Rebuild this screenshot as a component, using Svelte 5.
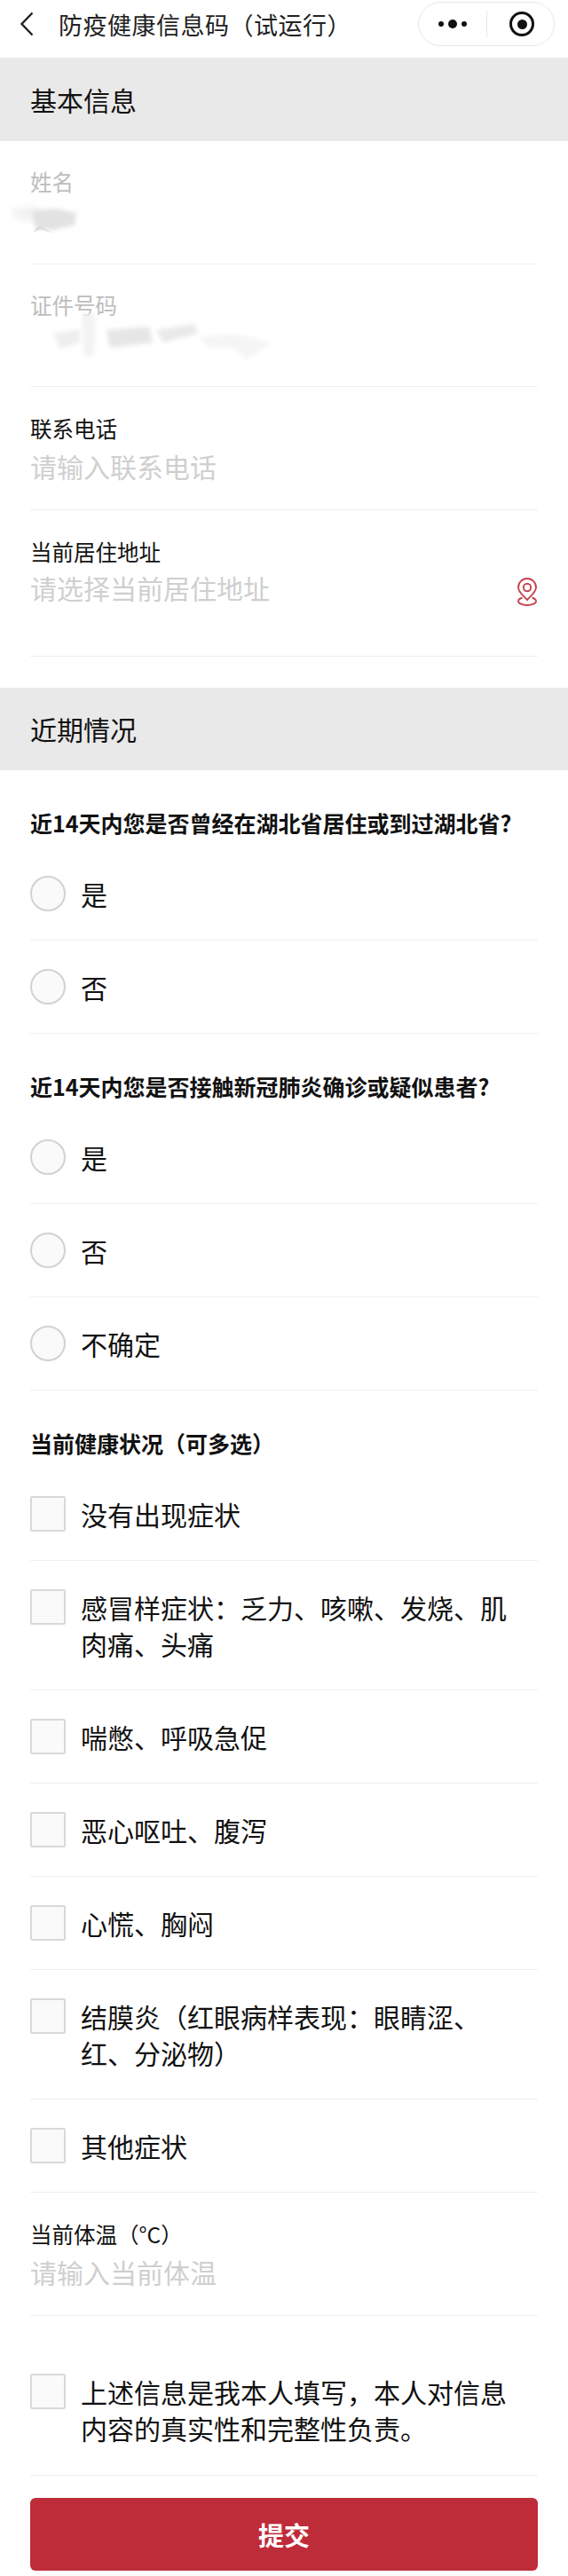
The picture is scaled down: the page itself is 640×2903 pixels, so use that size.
<script>
  const radios1 = ['是', '否'];
  const radios2 = ['是', '否', '不确定'];
  const symptoms = [
    '没有出现症状',
    '感冒样症状：乏力、咳嗽、发烧、肌肉痛、头痛',
    '喘憋、呼吸急促',
    '恶心呕吐、腹泻',
    '心慌、胸闷',
    '结膜炎（红眼病样表现：眼睛涩、红、分泌物）',
    '其他症状'
  ];
</script>

<div class="page">
  <header class="nav">
    <svg class="back" viewBox="0 0 18 30" width="18" height="30">
      <path d="M15.5 2.5 L3.5 15 L15.5 27.5" fill="none" stroke="#222" stroke-width="2.4" />
    </svg>
    <span class="nav-title">防疫健康信息码（试运行）</span>
    <div class="capsule">
      <div class="more">
        <i class="dot"></i><i class="dot big"></i><i class="dot"></i>
      </div>
      <span class="sep"></span>
      <div class="target"><i></i></div>
    </div>
  </header>

  <div class="section">基本信息</div>

  <div class="field muted-field">
    <div class="label muted">姓名</div>
    <!-- blurred out personal data -->
    <svg class="smudge name" width="340" height="45" viewBox="0 225 340 45">
      <defs>
        <filter id="soft" x="-30%" y="-30%" width="160%" height="160%"><feGaussianBlur stdDeviation="2.5" /></filter>
        <filter id="softer" x="-30%" y="-30%" width="160%" height="160%"><feGaussianBlur stdDeviation="3.5" /></filter>
      </defs>
      <path d="M12 236 L38 232 L50 240 L40 250 L16 246 Z" fill="#f2f2f2" filter="url(#softer)" />
      <path d="M36 238 L62 235 L86 240 L84 254 L60 259 L40 258 Z" fill="#e2e2e2" filter="url(#soft)" />
      <path d="M37 262 L44 254 L60 263 L46 258 Z" fill="#dcdcdc" />
    </svg>
  </div>
  <div class="field muted-field short">
    <div class="label muted">证件号码</div>
    <svg class="smudge idno" width="340" height="60" viewBox="0 350 340 60">
      <path d="M92 354 L108 354 L106 400 L94 402 Z" fill="#f3f3f3" filter="url(#soft)" />
      <path d="M60 376 L90 371 L90 386 L68 393 Z" fill="#eeeeee" filter="url(#soft)" />
      <path d="M120 372 L168 368 L172 386 L124 392 Z" fill="#e6e6e6" filter="url(#soft)" />
      <path d="M176 372 L220 365 L222 376 L184 386 Z" fill="#e9e9e9" filter="url(#soft)" />
      <path d="M224 380 L262 376 L306 386 L278 405 L264 392 L236 392 Z" fill="#f5f5f5" filter="url(#soft)" />
    </svg>
  </div>
  <div class="field">
    <div class="label">联系电话</div>
    <div class="placeholder">请输入联系电话</div>
  </div>
  <div class="field address">
    <div class="label">当前居住地址</div>
    <div class="address-row">
      <div class="placeholder">请选择当前居住地址</div>
      <svg class="pin" viewBox="0 0 24 32" width="24" height="32" fill="none" stroke="#c4434f" stroke-width="1.9">
        <path d="M12 25 C8 20.5 2 16.5 2 11 A10 10 0 0 1 22 11 C22 16.5 16 20.5 12 25 Z" />
        <circle cx="12" cy="11" r="4.2" />
        <path d="M6.5 22.5 C3.5 23.5 2 25 2 26.5 C2 29 6.5 31 12 31 C17.5 31 22 29 22 26.5 C22 25 20.5 23.5 17.5 22.5" />
      </svg>
    </div>
  </div>

  <div class="section second-section">近期情况</div>

  <div class="question">近14天内您是否曾经在湖北省居住或到过湖北省?</div>
  {#each radios1 as r}
    <div class="option"><span class="radio"></span><span class="text">{r}</span></div>
  {/each}

  <div class="question">近14天内您是否接触新冠肺炎确诊或疑似患者?</div>
  {#each radios2 as r}
    <div class="option"><span class="radio"></span><span class="text">{r}</span></div>
  {/each}

  <div class="question">当前健康状况（可多选）</div>
  {#each symptoms as s}
    <div class="option"><span class="box"></span><span class="text">{s}</span></div>
  {/each}

  <div class="field">
    <div class="label">当前体温（°C）</div>
    <div class="placeholder">请输入当前体温</div>
  </div>

  <div class="option agree"><span class="box"></span><span class="text">上述信息是我本人填写，本人对信息内容的真实性和完整性负责。</span></div>

  <button class="submit">提交</button>
</div>

<style>
  :global(body) {
    margin: 0;
    background: #fff;
  }

  .page {
    width: 640px;
    height: 2903px;
    overflow: hidden;
    font-family: "Noto Sans CJK SC", "Noto Sans", sans-serif;
    color: #111;
  }

  .nav {
    height: 65px;
    position: relative;
    display: flex;
    align-items: center;
    padding: 0 0 11px 21px;
    box-sizing: border-box;
  }

  .back {
    margin-right: 27px;
  }

  .nav-title {
    font-size: 27px;
    letter-spacing: 0.5px;
    color: #222;
  }

  .capsule {
    position: absolute;
    left: 471px;
    top: 2px;
    width: 154px;
    height: 50px;
    box-sizing: border-box;
    border: 1px solid #e8e8e8;
    border-radius: 25px;
    display: flex;
    align-items: center;
  }

  .more {
    width: 76px;
    display: flex;
    align-items: center;
    justify-content: center;
    gap: 5px;
  }

  .dot {
    width: 6px;
    height: 6px;
    border-radius: 50%;
    background: #111;
  }

  .dot.big {
    width: 10px;
    height: 10px;
  }

  .sep {
    width: 1px;
    height: 30px;
    background: #e8e8e8;
  }

  .target {
    width: 28px;
    height: 28px;
    margin-left: 25px;
    box-sizing: border-box;
    border: 3px solid #111;
    border-radius: 50%;
    display: flex;
    align-items: center;
    justify-content: center;
  }

  .target i {
    width: 11px;
    height: 11px;
    border-radius: 50%;
    background: #111;
  }

  .section {
    height: 94px;
    background: #e9e9e9;
    padding-left: 34px;
    font-size: 30px;
    line-height: 94px;
    box-sizing: border-box;
  }

  .second-section {
    height: 93px;
    line-height: 93px;
    margin-top: 35px;
  }

  .field {
    margin: 0 34px;
    height: 139px;
    box-sizing: border-box;
    border-bottom: 1px solid #efefef;
    padding-top: 31px;
    position: relative;
  }

  .muted-field {
    padding-top: 30px;
  }

  .short {
    height: 138px;
  }

  .address {
    height: 165px;
  }

  .label {
    font-size: 24.5px;
    line-height: 32px;
  }

  .muted {
    color: #bdbdbd;
  }

  .placeholder {
    font-size: 30px;
    line-height: 52px;
    color: #cfcfcf;
  }

  .address-row {
    display: flex;
    justify-content: space-between;
    align-items: flex-start;
    margin-top: -2px;
  }

  .pin {
    flex: none;
    margin-top: 15px;
  }

  .smudge {
    position: absolute;
    left: -34px;
    display: block;
  }

  .name {
    top: 66px;
  }

  .idno {
    top: 52px;
  }

  .question {
    margin: 0 34px;
    padding: 43px 0 12px;
    font-size: 25px;
    font-weight: 700;
    line-height: 32px;
  }

  .option {
    margin: 0 34px;
    padding: 32px 0 31px;
    display: flex;
    align-items: flex-start;
    border-bottom: 1px solid #efefef;
  }

  .radio {
    flex: none;
    width: 40px;
    height: 40px;
    box-sizing: border-box;
    border: 2px solid #d2d2d2;
    border-radius: 50%;
    background: #fafafa;
    margin-right: 17px;
  }

  .box {
    flex: none;
    width: 40px;
    height: 40px;
    box-sizing: border-box;
    border: 2px solid #d9d9d9;
    border-radius: 2px;
    background: #fafafa;
    margin-right: 17px;
  }

  .text {
    max-width: 490px;
    font-size: 30px;
    line-height: 41px;
  }

  .agree {
    padding: 65px 0 32px;
  }

  .submit {
    display: block;
    width: 572px;
    height: 82px;
    margin: 25px 34px 0;
    border: 0;
    border-radius: 6px;
    background: #be2c39;
    color: #fff;
    font-family: inherit;
    font-size: 29px;
    font-weight: 700;
  }
</style>
